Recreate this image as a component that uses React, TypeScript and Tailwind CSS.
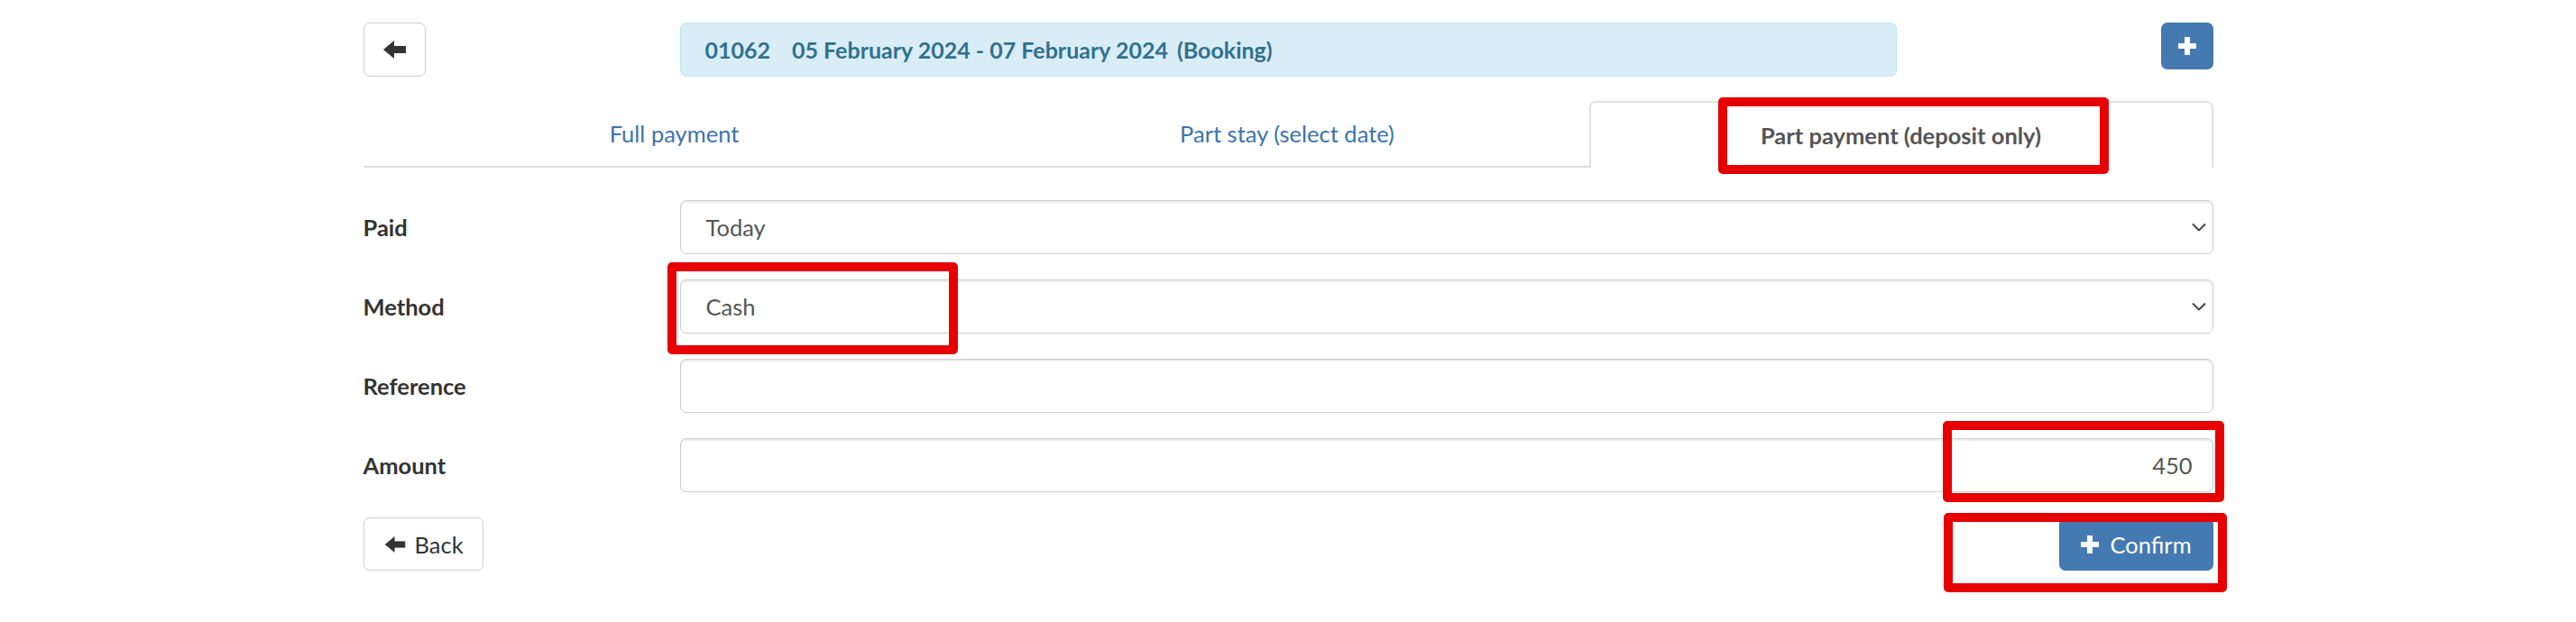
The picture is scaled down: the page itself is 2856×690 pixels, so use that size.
import React from "react"

function ArrowLeft({ className = "" }: { className?: string }) {
  return (
    <svg viewBox="0 0 25 20" className={className} fill="#333">
      <polygon points="0,10 12,0 12,20" />
      <rect x="11" y="6" width="14" height="8" />
    </svg>
  )
}

function Plus({ className = "" }: { className?: string }) {
  return (
    <svg viewBox="0 0 20 20" className={className} fill="#fff">
      <rect x="7" y="0" width="6" height="20" />
      <rect x="0" y="7" width="20" height="6" />
    </svg>
  )
}

function Chevron() {
  return (
    <svg viewBox="0 0 16 9" className="absolute right-[7px] top-1/2 h-[9px] w-[16px] -translate-y-1/2">
      <polyline points="1,1 8,8 15,1" fill="none" stroke="#444" strokeWidth="2" />
    </svg>
  )
}

const field =
  "relative flex h-[60px] items-center rounded-[7px] border border-[#ccc] bg-white shadow-[inset_0_2px_2px_rgba(0,0,0,0.075)] text-[25.5px] text-[#555]"

function Row({ label, children }: { label: string; children: React.ReactNode }) {
  return (
    <div className="grid grid-cols-[351px_1fr] items-center">
      <label className="text-[25.5px] font-bold text-[#333]">{label}</label>
      {children}
    </div>
  )
}

function Mark({ className }: { className: string }) {
  return <div className={`pointer-events-none absolute rounded-[5px] border-[10px] border-[#e60000] ${className}`} />
}

export default function App() {
  return (
    <div className="relative min-h-[690px] w-full bg-white font-['Lato',sans-serif] leading-[36px]">
      <div className="mx-auto flex w-[2051px] flex-col pt-[25px]">
        {/* header */}
        <div className="grid grid-cols-[351px_1349px_1fr] items-start">
          <button className="flex h-[60px] w-[69px] items-center justify-center rounded-[7px] border border-[#ccc] bg-white">
            <ArrowLeft className="h-[20px] w-[25px]" />
          </button>
          <div className="flex h-[60px] items-center rounded-[7px] border border-[#bce8f1] bg-[#d9edf7] pl-[27px] text-[25px] font-bold text-[#31708f]">
            <span className="mr-[24px]">01062</span>
            <span className="mr-[10px]">05 February 2024 - 07 February 2024</span>
            <span>(Booking)</span>
          </div>
          <button className="flex h-[52px] w-[58px] items-center justify-center justify-self-end rounded-[7px] bg-[#4479b2]">
            <Plus className="h-[20px] w-[20px]" />
          </button>
        </div>

        {/* tabs */}
        <div className="mt-[27px] flex">
          <div className="flex h-[74px] w-[690px] items-center justify-center border-b-2 border-[#ddd] text-[25.5px] text-[#3b74b0]">
            Full payment
          </div>
          <div className="flex h-[74px] w-[669px] items-center justify-center border-b-2 border-[#ddd] text-[25.5px] text-[#3b74b0]">
            Part stay (select date)
          </div>
          <div className="flex h-[74px] w-[692px] items-center justify-center rounded-t-[7px] border-2 border-b-0 border-[#e2e2e2] bg-white text-[25.5px] font-bold text-[#555]">
            Part payment (deposit only)
          </div>
        </div>

        {/* form */}
        <div className="mt-[36px] flex flex-col gap-[28px]">
          <Row label="Paid">
            <div className={`${field} pl-[28px]`}>
              Today
              <Chevron />
            </div>
          </Row>
          <Row label="Method">
            <div className={`${field} pl-[28px]`}>
              Cash
              <Chevron />
            </div>
          </Row>
          <Row label="Reference">
            <div className={field} />
          </Row>
          <Row label="Amount">
            <div className={`${field} justify-end pr-[22px]`}>450</div>
          </Row>
          <div className="flex items-center justify-between">
            <button className="flex h-[59px] w-[133px] items-center gap-[10px] rounded-[7px] border border-[#ccc] bg-white pl-[22px] text-[25.5px] text-[#333]">
              <ArrowLeft className="h-[18px] w-[24px]" />
              Back
            </button>
            <button className="flex h-[59px] w-[171px] items-center gap-[12px] rounded-[7px] bg-[#4479b2] pl-[23px] text-[25.5px] text-white">
              <Plus className="h-[20px] w-[22px]" />
              Confirm
            </button>
          </div>
        </div>
      </div>

      <Mark className="left-[1905px] top-[108px] h-[85px] w-[433px]" />
      <Mark className="left-[740px] top-[291px] h-[102px] w-[322px]" />
      <Mark className="left-[2154px] top-[467px] h-[90px] w-[312px]" />
      <Mark className="left-[2155px] top-[569px] h-[88px] w-[314px]" />
    </div>
  )
}
